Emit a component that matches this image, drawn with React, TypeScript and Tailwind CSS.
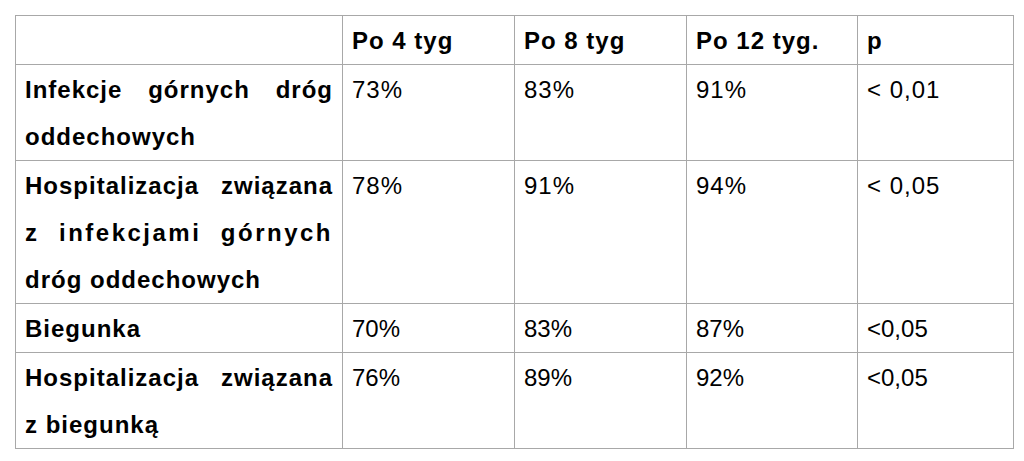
const rows = [
  {
    label: ["Infekcje górnych dróg", "oddechowych"],
    values: ["73%", "83%", "91%", "< 0,01"],
    narrow: false,
  },
  {
    label: ["Hospitalizacja związana", "z infekcjami górnych", "dróg oddechowych"],
    values: ["78%", "91%", "94%", "< 0,05"],
    narrow: false,
  },
  {
    label: ["Biegunka"],
    values: ["70%", "83%", "87%", "<0,05"],
    narrow: true,
  },
  {
    label: ["Hospitalizacja związana", "z biegunką"],
    values: ["76%", "89%", "92%", "<0,05"],
    narrow: true,
  },
];

const headers = ["Po 4 tyg", "Po 8 tyg", "Po 12 tyg.", "p"];

const cell =
  "border border-[#a8a8a8] align-top pt-[1px] pb-0 px-[9px] leading-[47px]";

const App = () => {
  return (
    <div
      className="min-h-[461px] w-[1024px] bg-white pt-[15px] pl-[15px] text-[24px] text-black"
      style={{ fontFamily: '"Liberation Sans", Arial, sans-serif' }}
    >
      <table className="table-fixed border-collapse w-[998px]">
        <colgroup>
          <col className="w-[327px]" />
          <col className="w-[172px]" />
          <col className="w-[172px]" />
          <col className="w-[171px]" />
          <col className="w-[156px]" />
        </colgroup>
        <thead>
          <tr>
            <th className={cell}></th>
            {headers.map((h) => (
              <th key={h} className={`${cell} text-left font-bold tracking-[1px]`}>
                {h}
              </th>
            ))}
          </tr>
        </thead>
        <tbody>
          {rows.map((row, i) => (
            <tr key={i}>
              <td className={`${cell} font-bold tracking-[1px]`}>
                {row.label.map((line, j) => {
                  const last = j === row.label.length - 1;
                  const spread = line === "z infekcjami górnych";
                  return (
                    <div
                      key={j}
                      className={
                        last
                          ? "text-left"
                          : spread
                            ? "text-justify [text-align-last:justify] tracking-[2.5px]"
                            : "text-justify [text-align-last:justify]"
                      }
                    >
                      {line}
                    </div>
                  );
                })}
              </td>
              {row.values.map((v, k) => (
                <td
                  key={k}
                  className={`${cell} ${row.narrow ? "tracking-[0px]" : "tracking-[1px]"}`}
                >
                  {v}
                </td>
              ))}
            </tr>
          ))}
        </tbody>
      </table>
    </div>
  );
};

export default App;
